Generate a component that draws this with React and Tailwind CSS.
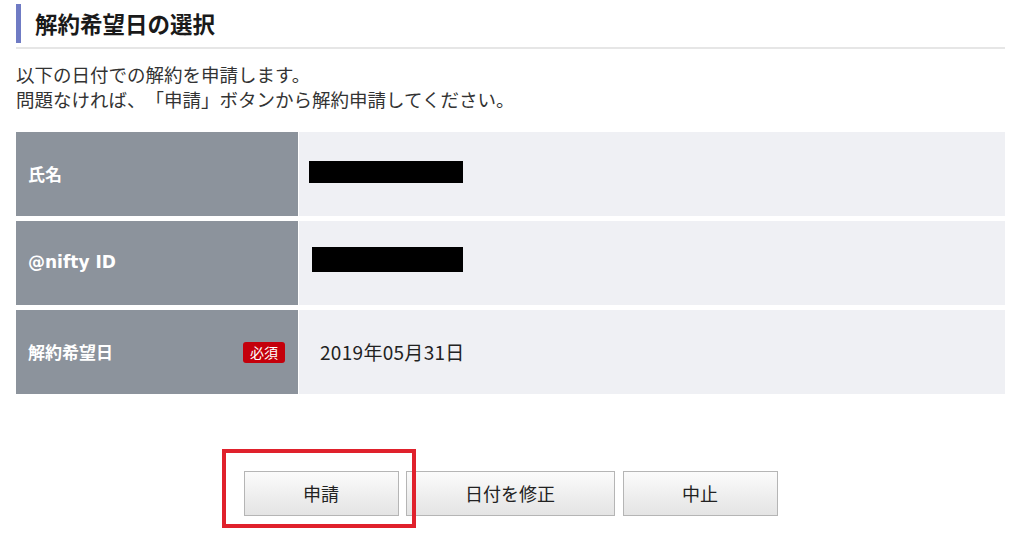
import React from 'react';

const font = { fontFamily: '"Noto Sans CJK JP", "Noto Sans", sans-serif' };

const rows = [
  { label: '氏名', redact: 'ml-[10px] mt-[-4px] w-[154px] h-[22px]' },
  { label: '@nifty ID', redact: 'ml-[13px] mt-[-8px] w-[151px] h-[25px]', latin: true },
];

const App = () => {
  return (
    <div className="w-[1024px] h-[550px] bg-white text-[#222] relative [text-spacing-trim:space-all]" style={font}>
      <div className="pl-4 w-[1005px] pt-1">
        {/* Title */}
        <div className="flex items-center h-[39px] border-l-[5px] border-[#6f7bc4] pl-[14px]">
          <h1 className="text-[22.5px] font-bold leading-none text-[#1a1a1a]">解約希望日の選択</h1>
        </div>
        <div className="mt-[4px] h-[2px] bg-[#e6e6e6]" />

        {/* Message */}
        <div className="mt-[13px] text-[18.5px] leading-[25px] text-[#333]">
          <p>以下の日付での解約を申請します。</p>
          <p>問題なければ、「申請」ボタンから解約申請してください。</p>
        </div>

        {/* Table */}
        <div className="mt-[20px] flex flex-col gap-[5px]">
          {rows.map((row) => (
            <div key={row.label} className="flex h-[84px] gap-px">
              <div
                className="w-[282px] bg-[#8c939c] flex items-center px-3 text-[17px] font-bold text-white"
                style={row.latin ? { fontFamily: '"DejaVu Sans", "Noto Sans CJK JP", sans-serif' } : undefined}
              >
                {row.label}
              </div>
              <div className="flex-1 bg-[#eff0f4] flex items-center">
                <div className={`bg-black ${row.redact}`} />
              </div>
            </div>
          ))}
          <div className="flex h-[84px] gap-px">
            <div className="w-[282px] bg-[#8c939c] flex items-center justify-between pl-3 pr-[13px] text-[17px] font-bold text-white">
              <span>解約希望日</span>
              <span className="bg-[#c4000b] rounded-[3px] px-[7px] h-[21px] flex items-center text-[14px] font-normal leading-none">必須</span>
            </div>
            <div className="flex-1 bg-[#eff0f4] flex items-center pl-[21px] text-[19px] tracking-[0.3px] text-[#222]">
              2019年05月31日
            </div>
          </div>
        </div>

        {/* Buttons */}
        <div className="mt-[77px] flex justify-center gap-[7px] text-[18px] text-[#222]">
          <button type="button" className="w-[155px] h-[45px] border border-[#b5b5b5] bg-gradient-to-b from-[#fbfbfb] to-[#e4e4e4]">申請</button>
          <button type="button" className="w-[209px] h-[45px] border border-[#b5b5b5] bg-gradient-to-b from-[#fbfbfb] to-[#e4e4e4]">日付を修正</button>
          <button type="button" className="w-[155px] h-[45px] border border-[#b5b5b5] bg-gradient-to-b from-[#fbfbfb] to-[#e4e4e4] ml-px">中止</button>
        </div>
      </div>

      {/* Annotation box */}
      <div className="absolute left-[222px] top-[449px] w-[194px] h-[79px] border-4 border-[#e0212c]" />
    </div>
  );
};

export default App;
